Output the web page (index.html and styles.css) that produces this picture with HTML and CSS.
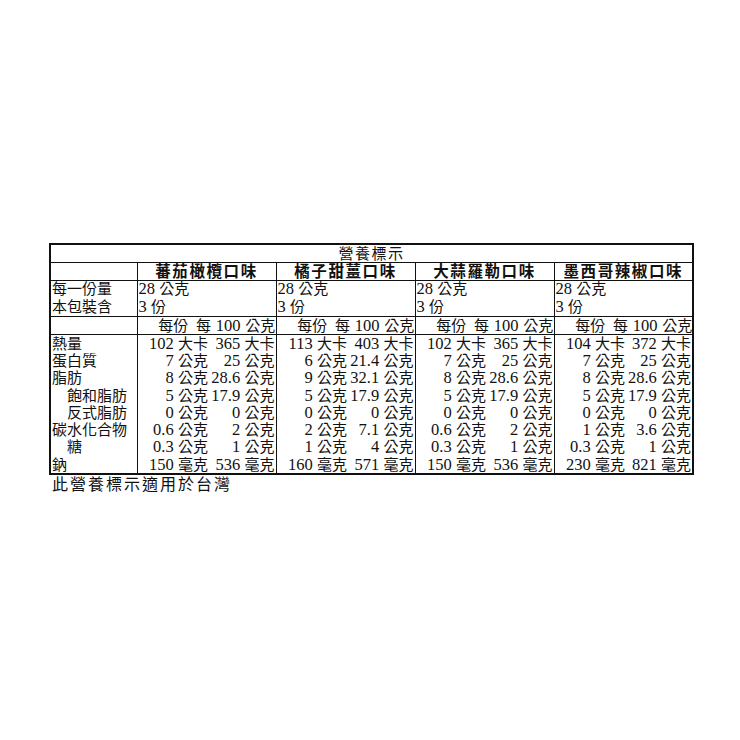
FILE: index.html
```html
<!DOCTYPE html>
<html lang="zh-Hant">
<head>
<meta charset="utf-8">
<title>營養標示</title>
<link rel="stylesheet" href="styles.css">
</head>
<body>
<div class="page">
<table class="nut">
<colgroup>
<col class="c-label">
<col class="c-a"><col class="c-b">
<col class="c-a"><col class="c-b">
<col class="c-a"><col class="c-b">
<col class="c-a"><col class="c-b">
</colgroup>
<tr class="sep title-row"><td colspan="9" class="title">營養標示</td></tr>
<tr class="sep head-row">
<td></td>
<td colspan="2" class="g flavor">蕃茄橄欖口味</td>
<td colspan="2" class="g flavor">橘子甜薑口味</td>
<td colspan="2" class="g flavor">大蒜羅勒口味</td>
<td colspan="2" class="g flavor">墨西哥辣椒口味</td>
</tr>
<tr class="sep serv-row">
<td class="lab2"><div class="ln">每一份量</div><div class="ln">本包裝含</div></td>
<td colspan="2" class="g serv"><div class="ln"><span class="n">28</span> 公克</div><div class="ln"><span class="n">3</span> 份</div></td>
<td colspan="2" class="g serv"><div class="ln"><span class="n">28</span> 公克</div><div class="ln"><span class="n">3</span> 份</div></td>
<td colspan="2" class="g serv"><div class="ln"><span class="n">28</span> 公克</div><div class="ln"><span class="n">3</span> 份</div></td>
<td colspan="2" class="g serv"><div class="ln"><span class="n">28</span> 公克</div><div class="ln"><span class="n">3</span> 份</div></td>
</tr>
<tr class="sep unit-row">
<td></td>
<td class="g per">每份</td><td class="per100"><span class="wide">每 <span class="n">100</span> 公克</span></td>
<td class="g per">每份</td><td class="per100"><span class="wide">每 <span class="n">100</span> 公克</span></td>
<td class="g per">每份</td><td class="per100"><span class="wide">每 <span class="n">100</span> 公克</span></td>
<td class="g per">每份</td><td class="per100"><span class="wide">每 <span class="n">100</span> 公克</span></td>
</tr>
<tr class="d">
<td class="lab">熱量</td>
<td class="g v1"><span class="n">102</span> 大卡</td><td class="v2"><span class="n">365</span> 大卡</td>
<td class="g v1"><span class="n">113</span> 大卡</td><td class="v2"><span class="n">403</span> 大卡</td>
<td class="g v1"><span class="n">102</span> 大卡</td><td class="v2"><span class="n">365</span> 大卡</td>
<td class="g v1"><span class="n">104</span> 大卡</td><td class="v2"><span class="n">372</span> 大卡</td>
</tr>
<tr class="d">
<td class="lab">蛋白質</td>
<td class="g v1"><span class="n">7</span> 公克</td><td class="v2"><span class="n">25</span> 公克</td>
<td class="g v1"><span class="n">6</span> 公克</td><td class="v2"><span class="n">21.4</span> 公克</td>
<td class="g v1"><span class="n">7</span> 公克</td><td class="v2"><span class="n">25</span> 公克</td>
<td class="g v1"><span class="n">7</span> 公克</td><td class="v2"><span class="n">25</span> 公克</td>
</tr>
<tr class="d">
<td class="lab">脂肪</td>
<td class="g v1"><span class="n">8</span> 公克</td><td class="v2"><span class="n">28.6</span> 公克</td>
<td class="g v1"><span class="n">9</span> 公克</td><td class="v2"><span class="n">32.1</span> 公克</td>
<td class="g v1"><span class="n">8</span> 公克</td><td class="v2"><span class="n">28.6</span> 公克</td>
<td class="g v1"><span class="n">8</span> 公克</td><td class="v2"><span class="n">28.6</span> 公克</td>
</tr>
<tr class="d">
<td class="lab sub">飽和脂肪</td>
<td class="g v1"><span class="n">5</span> 公克</td><td class="v2"><span class="n">17.9</span> 公克</td>
<td class="g v1"><span class="n">5</span> 公克</td><td class="v2"><span class="n">17.9</span> 公克</td>
<td class="g v1"><span class="n">5</span> 公克</td><td class="v2"><span class="n">17.9</span> 公克</td>
<td class="g v1"><span class="n">5</span> 公克</td><td class="v2"><span class="n">17.9</span> 公克</td>
</tr>
<tr class="d">
<td class="lab sub">反式脂肪</td>
<td class="g v1"><span class="n">0</span> 公克</td><td class="v2"><span class="n">0</span> 公克</td>
<td class="g v1"><span class="n">0</span> 公克</td><td class="v2"><span class="n">0</span> 公克</td>
<td class="g v1"><span class="n">0</span> 公克</td><td class="v2"><span class="n">0</span> 公克</td>
<td class="g v1"><span class="n">0</span> 公克</td><td class="v2"><span class="n">0</span> 公克</td>
</tr>
<tr class="d">
<td class="lab">碳水化合物</td>
<td class="g v1"><span class="n">0.6</span> 公克</td><td class="v2"><span class="n">2</span> 公克</td>
<td class="g v1"><span class="n">2</span> 公克</td><td class="v2"><span class="n">7.1</span> 公克</td>
<td class="g v1"><span class="n">0.6</span> 公克</td><td class="v2"><span class="n">2</span> 公克</td>
<td class="g v1"><span class="n">1</span> 公克</td><td class="v2"><span class="n">3.6</span> 公克</td>
</tr>
<tr class="d">
<td class="lab sub">糖</td>
<td class="g v1"><span class="n">0.3</span> 公克</td><td class="v2"><span class="n">1</span> 公克</td>
<td class="g v1"><span class="n">1</span> 公克</td><td class="v2"><span class="n">4</span> 公克</td>
<td class="g v1"><span class="n">0.3</span> 公克</td><td class="v2"><span class="n">1</span> 公克</td>
<td class="g v1"><span class="n">0.3</span> 公克</td><td class="v2"><span class="n">1</span> 公克</td>
</tr>
<tr class="d">
<td class="lab">鈉</td>
<td class="g v1"><span class="n">150</span> 毫克</td><td class="v2"><span class="n">536</span> 毫克</td>
<td class="g v1"><span class="n">160</span> 毫克</td><td class="v2"><span class="n">571</span> 毫克</td>
<td class="g v1"><span class="n">150</span> 毫克</td><td class="v2"><span class="n">536</span> 毫克</td>
<td class="g v1"><span class="n">230</span> 毫克</td><td class="v2"><span class="n">821</span> 毫克</td>
</tr>
</table>
<p class="note">此營養標示適用於台灣</p>
</div>
</body>
</html>
```

FILE: styles.css
```css
html, body {
  margin: 0;
  padding: 0;
  background: #ffffff;
}

.page {
  padding: 243px 0 0 49px;
  font-family: "Liberation Serif", "Noto Sans CJK TC", serif;
  color: #111111;
}

.nut {
  border-collapse: collapse;
  table-layout: fixed;
  width: 645px;
  border: 2px solid #111111;
  font-size: 15px;
}

.c-label { width: 87px; }
.c-a { width: 72px; }
.c-b { width: 67px; }

.nut td {
  padding: 0 1px;
  height: 17.3px;
  line-height: 14px;
  white-space: nowrap;
  vertical-align: middle;
  word-spacing: 0.5px;
}

.nut tr.sep td {
  border-bottom: 1px solid #111111;
}

.nut td.g {
  border-left: 1px solid #111111;
}

.title-row td,
.head-row td,
.unit-row td {
  height: 17px;
}

.title {
  text-align: center;
  letter-spacing: 1.5px;
}

.flavor {
  text-align: center;
  font-weight: bold;
  font-size: 15.5px;
  letter-spacing: 1.6px;
}

.ln {
  height: 17.5px;
  line-height: 17.5px;
  overflow: visible;
}

.serv,
.lab2 {
  text-align: left;
}

.lab {
  text-align: left;
}

.lab.sub {
  padding-left: 16px;
}

.per {
  text-align: center;
  padding-left: 0;
  padding-right: 4px;
}

.per100 {
  text-align: right;
}

.wide {
  display: block;
  margin-left: -14px;
  text-align: right;
  word-spacing: 1px;
}

.v1 {
  text-align: right;
  padding-right: 2px;
}

.v2 {
  text-align: right;
  padding-right: 0;
}

.n {
  font-size: 16.5px;
  line-height: 14px;
}

.note {
  margin: 0;
  padding: 1px 0 0 3px;
  font-size: 16px;
  line-height: 18px;
  letter-spacing: 2px;
}
```
